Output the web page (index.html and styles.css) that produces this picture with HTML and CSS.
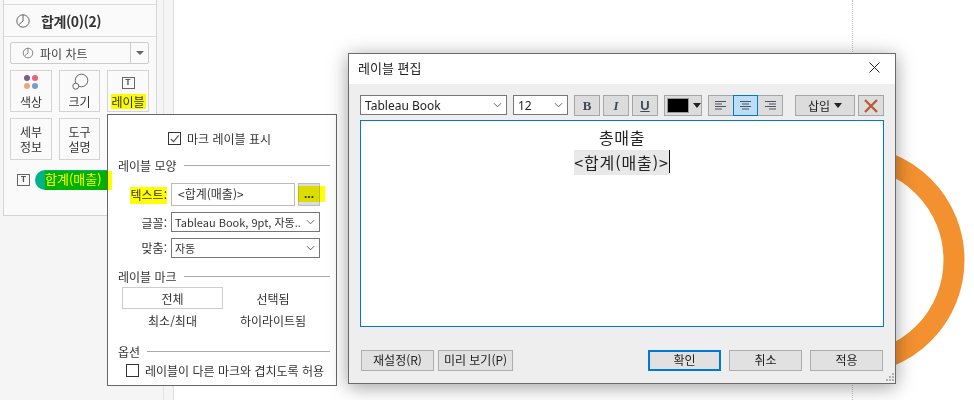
FILE: index.html
```html
<!DOCTYPE html>
<html lang="ko">
<head>
<meta charset="utf-8">
<title>레이블 편집</title>
<link rel="stylesheet" href="styles.css">
</head>
<body>
<div class="stage">
  <aside class="panel">
    <div class="panel-cap"></div>
    <div class="shelf-title">
      <svg class="pie-big" viewBox="0 0 14 14"><circle cx="7" cy="7" r="6.2"/><path d="M7 .8V7L3 10.5"/></svg>
      <span>합계(0)(2)</span>
    </div>
    <div class="panel-body">
      <div class="mark-type">
        <span class="mark-type-main">
          <svg class="pie-small" viewBox="0 0 12 12"><circle cx="6" cy="6" r="4.8"/><path d="M6 1.2V6L3 8.5"/></svg>
          파이 차트
        </span>
        <span class="mark-type-arrow"><i class="tri"></i></span>
      </div>
      <div class="mark-cards">
        <div class="card">
          <svg class="card-icon" viewBox="0 0 18 18"><circle cx="5" cy="5" r="3" fill="#7a5c97"/><circle cx="13" cy="5" r="3" fill="#e8646f"/><circle cx="5" cy="13" r="3" fill="#f0a478"/><circle cx="13" cy="13" r="3" fill="#6f9fd0"/></svg>
          <span>색상</span>
        </div>
        <div class="card">
          <svg class="card-icon" viewBox="0 0 18 18"><circle cx="10.5" cy="7.5" r="6.3" fill="none" stroke="#666"/><circle cx="4.8" cy="13.2" r="3" fill="#fafafa" stroke="#666"/></svg>
          <span>크기</span>
        </div>
        <div class="card">
          <span class="t-box">T</span>
          <span>레이블</span>
        </div>
        <div class="card card-text"><span class="line">세부</span><span class="line">정보</span></div>
        <div class="card card-text"><span class="line">도구</span><span class="line">설명</span></div>
      </div>
      <div class="pill-row">
        <span class="t-box">T</span>
        <span class="pill">합계(매출)</span>
      </div>
    </div>
  </aside>
  <div class="gutter"></div>
  <main class="canvas">
    <i class="dots"></i>
  </main>

  <svg class="ring" viewBox="0 0 232 232"><circle cx="116" cy="116" r="104" fill="none" stroke="#f39130" stroke-width="21"/></svg>

  <section class="popup">
    <label class="check-row check-center"><i class="check on"><svg viewBox="0 0 12 12"><path d="M2 6.5 5 9.5 10.5 2.5"/></svg></i>마크 레이블 표시</label>
    <div class="sec sec-first"><span>레이블 모양</span><i></i></div>
    <div class="form">
      <span class="flabel">텍스트:</span>
      <div class="text-row"><span class="field">&lt;합계(매출)&gt;</span><span class="more">...</span></div>
      <span class="flabel">글꼴:</span>
      <div class="select"><span>Tableau Book, 9pt, 자동..</span><svg viewBox="0 0 10 6"><path d="M1 1 5 5 9 1"/></svg></div>
      <span class="flabel">맞춤:</span>
      <div class="select"><span>자동</span><svg viewBox="0 0 10 6"><path d="M1 1 5 5 9 1"/></svg></div>
    </div>
    <div class="sec sec-mark"><span>레이블 마크</span><i></i></div>
    <div class="mark-grid">
      <span class="opt opt-on">전체</span>
      <span class="opt">선택됨</span>
      <span class="opt">최소/최대</span>
      <span class="opt">하이라이트됨</span>
    </div>
    <div class="sec sec-opt"><span>옵션</span><i></i></div>
    <label class="check-row check-left"><i class="check"></i>레이블이 다른 마크와 겹치도록 허용</label>
  </section>

  <section class="dialog">
    <header class="dlg-title">
      <span>레이블 편집</span>
      <svg class="dlg-close" viewBox="0 0 11 11"><path d="M.5.5 10.5 10.5M10.5.5.5 10.5"/></svg>
    </header>
    <div class="toolbar">
      <div class="select tb-font"><span>Tableau Book</span><svg viewBox="0 0 10 6"><path d="M1 1 5 5 9 1"/></svg></div>
      <div class="select tb-size"><span>12</span><svg viewBox="0 0 10 6"><path d="M1 1 5 5 9 1"/></svg></div>
      <div class="tb-group">
        <span class="tb-btn tb-b">B</span>
        <span class="tb-btn tb-i">I</span>
        <span class="tb-btn tb-u">U</span>
      </div>
      <span class="tb-color"><i class="swatch"></i><i class="tri tri-dark"></i></span>
      <div class="tb-align">
        <span class="al"><svg viewBox="0 0 11 9"><path d="M0 .5H11M0 3H7M0 5.5H11M0 8H7"/></svg></span>
        <span class="al al-on"><svg viewBox="0 0 11 9"><path d="M0 .5H11M2 3H9M0 5.5H11M2 8H9"/></svg></span>
        <span class="al"><svg viewBox="0 0 11 9"><path d="M0 .5H11M4 3H11M0 5.5H11M4 8H11"/></svg></span>
      </div>
      <span class="tb-insert">삽입<i class="tri tri-dark"></i></span>
      <span class="tb-del"><svg viewBox="0 0 14 14"><path d="M1 1 13 13M13 1 1 13"/></svg></span>
    </div>
    <div class="editor">
      <p class="ed-title">총매출</p>
      <p><span class="token">&lt;합계(매출)&gt;</span><i class="caret"></i></p>
    </div>
    <footer class="dlg-foot">
      <span class="btn btn-reset">재설정(R)</span>
      <span class="btn btn-preview">미리 보기(P)</span>
      <span class="btn btn-ok">확인</span>
      <span class="btn">취소</span>
      <span class="btn">적용</span>
    </footer>
    <svg class="grip" viewBox="0 0 9 9"><path d="M7 0h2v2H7zM4 3h2v2H4zM7 3h2v2H7zM1 6h2v2H1zM4 6h2v2H4zM7 6h2v2H7z"/></svg>
  </section>

  <i class="hl hl-label"></i>
  <i class="hl hl-pill"></i>
  <i class="hl hl-text"></i>
  <i class="hl hl-more"></i>
</div>
</body>
</html>
```
FILE: styles.css
```css
* { box-sizing: border-box; }
html, body { margin: 0; padding: 0; }
body {
  width: 974px;
  height: 400px;
  overflow: hidden;
  font-family: "Noto Sans CJK KR", "Noto Sans", sans-serif;
  font-size: 12px;
  color: #222;
}
i { display: block; font-style: normal; }

.stage {
  position: relative;
  display: flex;
  width: 974px;
  height: 400px;
  padding-left: 3px;
  background: #f5f5f5;
  overflow: hidden;
}

/* left panel */
.panel {
  flex: none;
  align-self: flex-start;
  width: 154px;
  height: 216px;
  border: 1px solid #d4d4d4;
  border-top: 0;
  background: #fafafa;
}
.panel-cap { height: 5px; border-bottom: 1px solid #dcdcdc; }
.shelf-title {
  display: flex;
  align-items: center;
  height: 32px;
  padding-left: 12px;
  border-bottom: 1px solid #dcdcdc;
  font-size: 14px;
  font-weight: 700;
  letter-spacing: -.4px;
  color: #333;
}
.pie-big { width: 14px; height: 14px; margin-right: 11px; fill: none; stroke: #666; stroke-width: 1; }
.panel-body { padding: 5px 7px 0 6px; }
.mark-type {
  display: flex;
  height: 22px;
  border: 1px solid #ccc;
  border-radius: 2px;
  color: #444;
}
.mark-type-main { flex: 1; display: flex; align-items: center; padding-left: 11px; gap: 6px; }
.pie-small { width: 12px; height: 12px; fill: none; stroke: #888; stroke-width: 1; }
.mark-type-arrow { flex: none; width: 18px; display: flex; align-items: center; justify-content: center; border-left: 1px solid #ccc; }
.tri { width: 0; height: 0; border: 4px solid transparent; border-top: 4px solid #666; border-bottom: 0; }
.tri-dark { border-top-color: #222; border-width: 5px 4px 0; }
.mark-cards {
  display: grid;
  grid-template-columns: 42px 41px 42px;
  grid-auto-rows: 42px;
  gap: 6px 7px;
  margin-top: 6px;
}
.card {
  display: flex;
  flex-direction: column;
  align-items: center;
  justify-content: flex-end;
  padding-bottom: 1px;
  border: 1px solid #d4d4d4;
  color: #333;
  line-height: 16px;
}
.card-icon { width: 18px; height: 18px; margin-bottom: 3px; }
.card .t-box { margin-bottom: 5px; }
.card-text { justify-content: center; padding-bottom: 0; }
.line { display: block; height: 15px; line-height: 15px; }
.t-box {
  display: flex;
  align-items: center;
  justify-content: center;
  width: 13px;
  height: 12px;
  border: 1px solid #666;
  font: bold 9px/1 "Liberation Mono", monospace;
  color: #555;
}
.pill-row { display: flex; align-items: center; gap: 5px; height: 20px; margin-top: 10px; padding-left: 7px; }
.pill {
  display: block;
  width: 90px;
  height: 20px;
  padding-left: 10px;
  border-radius: 10px 0 0 10px;
  background: #00b18a;
  color: #fff;
  font-size: 13px;
  line-height: 17px;
}

.gutter { flex: none; width: 10px; margin-left: 6px; border-left: 1px solid #e4e4e4; background: #f5f5f5; }
.canvas { position: relative; flex: 1; background: #fff; border-left: 1px solid #dedede; }
.dots { position: absolute; left: 678px; top: 0; bottom: 0; border-left: 1px dotted #c4c4c4; }
.ring { position: absolute; left: 734px; top: 144px; width: 232px; height: 232px; }

/* floating label popup */
.popup {
  position: absolute;
  left: 107px;
  top: 114px;
  width: 230px;
  height: 272px;
  border: 1px solid #666;
  background: #fff;
  color: #333;
  font-size: 12px;
}
.check-row { display: flex; align-items: center; gap: 6px; height: 13px; }
.check-center { justify-content: center; margin-top: 17px; padding-right: 5px; }
.check-left { margin-top: 6px; padding-left: 18px; white-space: nowrap; }
.check { flex: none; width: 13px; height: 13px; border: 1px solid #333; }
.check svg { display: block; width: 11px; height: 11px; fill: none; stroke: #555; stroke-width: 1.3; }
.sec { display: flex; align-items: center; gap: 7px; height: 14px; padding: 0 6px 0 10px; }
.sec i { flex: 1; border-top: 1px solid #aaa; }
.sec-first { margin-top: 13px; }
.sec-mark { margin-top: 11px; }
.sec-opt { margin-top: 12px; }
.form {
  display: grid;
  grid-template-columns: 59px 149px;
  grid-template-rows: 23px 20px 20px;
  gap: 6px 4px;
  align-items: center;
  margin-top: 11px;
}
.form > :nth-child(n+5) { margin-top: -1px; }
.flabel { text-align: right; }
.text-row { display: flex; gap: 3px; height: 23px; }
.field { flex: none; width: 124px; padding-left: 6px; border: 1px solid #bbb; line-height: 20px; }
.more { flex: none; width: 22px; background: #dcdcdc; border: 1px solid #bdbdbd; text-align: center; line-height: 21px; font-family: "Liberation Sans", sans-serif; font-weight: bold; }
.select {
  display: flex;
  align-items: center;
  justify-content: space-between;
  height: 20px;
  padding: 0 4px 0 3px;
  border: 1px solid #777;
  background: #fff;
  font-size: 11px;
  white-space: nowrap;
  overflow: hidden;
}
.select svg { flex: none; width: 9px; height: 6px; fill: none; stroke: #555; stroke-width: 1; }
.mark-grid { display: grid; grid-template-columns: 101px 100px; grid-auto-rows: 22px; margin-top: 4px; margin-left: 14px; }
.opt { display: flex; align-items: center; justify-content: center; }
.opt-on { border: 1px solid #ccc; }
.sec-opt { margin-top: 13px; }

/* edit label dialog */
.dialog {
  position: absolute;
  left: 348px;
  top: 53px;
  display: flex;
  flex-direction: column;
  width: 548px;
  height: 331px;
  border: 1px solid #6b6b6b;
  background: #eee;
  box-shadow: 0 3px 18px rgba(0, 0, 0, .38);
  color: #222;
}
.dlg-title {
  display: flex;
  align-items: center;
  justify-content: space-between;
  height: 30px;
  padding: 0 15px 3px 9px;
  background: #fff;
  font-size: 13px;
}
.dlg-close { width: 11px; height: 11px; fill: none; stroke: #222; stroke-width: 1; }
.toolbar { display: flex; height: 21px; margin: 11px 11px 0; }
.toolbar .select { font-family: "Noto Sans", sans-serif; font-size: 12px; padding-left: 4px; }
.tb-font { width: 147px; }
.tb-size { width: 55px; margin-left: 6px; }
.tb-group { display: flex; gap: 3px; margin-left: 6px; }
.tb-btn, .tb-del, .tb-color, .tb-insert, .tb-align { border: 1px solid #a6a6a6; background: #dcdcdc; }
.tb-btn { width: 26px; text-align: center; font: bold 13px/19px "Liberation Serif", serif; color: #3f4958; }
.tb-i { font-style: italic; }
.tb-u { text-decoration: underline; font-family: "Liberation Sans", sans-serif; }
.tb-color { display: flex; align-items: center; gap: 4px; width: 38px; margin-left: 6px; padding-left: 2px; }
.swatch { width: 23px; height: 15px; background: #000; border: 1px solid #999; }
.tb-align { display: flex; width: 75px; margin-left: 6px; }
.al { flex: 1; display: flex; align-items: center; justify-content: center; }
.al svg { width: 11px; height: 9px; fill: none; stroke: #4a5463; stroke-width: 1; }
.al-on { margin: -1px 0; background: #bddcf5; border: 1px solid #0078d7; }
.tb-insert { display: flex; align-items: center; justify-content: center; gap: 4px; width: 60px; margin-left: 12px; }
.tb-del { display: flex; align-items: center; justify-content: center; width: 26px; margin-left: 3px; }
.tb-del svg { width: 14px; height: 14px; fill: none; stroke: #bb5a3a; stroke-width: 2.4; }
.editor {
  height: 207px;
  margin: 4px 11px 0;
  padding-top: 4px;
  border: 1px solid #0078d7;
  background: #fff;
  font-size: 16px;
  line-height: 25px;
  text-align: center;
  color: #222;
}
.editor p { display: flex; justify-content: center; height: 25px; margin: 0; }
.ed-title { letter-spacing: .6px; }
.token { background: #e8e8e8; letter-spacing: .9px; }
.caret { width: 1px; height: 23px; background: #111; }
.dlg-foot { display: flex; gap: 8px; height: 21px; margin-top: 23px; padding: 0 12px; }
.btn {
  width: 73px;
  height: 21px;
  border: 1px solid #adadad;
  background: #e1e1e1;
  text-align: center;
  line-height: 18px;
  color: #222;
}
.btn-reset { margin-right: -4px; }
.btn-preview { width: 75px; margin-right: auto; }
.btn-ok { border: 2px solid #0078d7; line-height: 16px; }
.grip { position: absolute; right: 1px; bottom: 1px; width: 9px; height: 9px; fill: #b0b0b0; }

/* yellow highlighter marks laid over the screenshot */
.hl { position: absolute; background: #ff0; mix-blend-mode: multiply; }
.hl-label { left: 111px; top: 94px; width: 35px; height: 15px; }
.hl-pill { left: 45px; top: 171px; width: 67px; height: 19px; }
.hl-text { left: 130px; top: 187px; width: 37px; height: 17px; }
.hl-more { left: 298px; top: 186px; width: 27px; height: 16px; }
```
